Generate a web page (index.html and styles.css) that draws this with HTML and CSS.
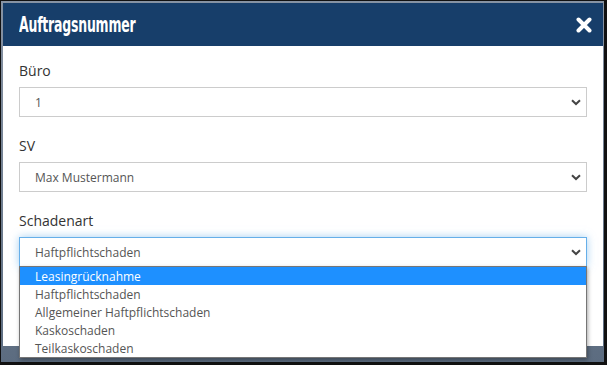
FILE: index.html
```html
<!DOCTYPE html>
<html lang="de">

<head>
  <meta charset="UTF-8">
  <meta name="viewport" content="width=device-width, initial-scale=1.0">
  <title>Auftragsnummer</title>
  <link rel="stylesheet" href="styles.css">
</head>

<body>

  <div class="screen">
    <div class="modal">
      <div class="modalHeader">
        <h4 class="modalTitle">Auftragsnummer</h4>
        <svg class="closeIcon" width="16" height="16" viewBox="0 0 16 16">
          <path d="M2.5 2.5 L13.5 13.5 M13.5 2.5 L2.5 13.5" stroke="#fff" stroke-width="4" stroke-linecap="round" fill="none"/>
        </svg>
      </div>

      <div class="modalBody">
        <div class="field">
          <label class="fieldLabel">Büro</label>
          <div class="select">
            <span>1</span>
            <svg class="chevron" width="10" height="7" viewBox="0 0 10 7"><path d="M1 1.2 L5 5 L9 1.2" stroke="#444" stroke-width="2" fill="none"/></svg>
          </div>
        </div>

        <div class="field">
          <label class="fieldLabel">SV</label>
          <div class="select">
            <span>Max Mustermann</span>
            <svg class="chevron" width="10" height="7" viewBox="0 0 10 7"><path d="M1 1.2 L5 5 L9 1.2" stroke="#444" stroke-width="2" fill="none"/></svg>
          </div>
        </div>

        <div class="field">
          <label class="fieldLabel">Schadenart</label>
          <div class="selectWrap">
            <div class="select focused">
              <span>Haftpflichtschaden</span>
              <svg class="chevron" width="10" height="7" viewBox="0 0 10 7"><path d="M1 1.2 L5 5 L9 1.2" stroke="#444" stroke-width="2" fill="none"/></svg>
            </div>
            <!-- open option list -->
            <ul class="optionList">
              <li class="option active">Leasingrücknahme</li>
              <li class="option">Haftpflichtschaden</li>
              <li class="option">Allgemeiner Haftpflichtschaden</li>
              <li class="option">Kaskoschaden</li>
              <li class="option">Teilkaskoschaden</li>
            </ul>
          </div>
        </div>
      </div>
    </div>
  </div>

</body>

</html>
```

FILE: styles.css
```css
* {
  box-sizing: border-box;
}

body {
  margin: 0;
  font-family: "Open Sans", Arial, sans-serif;
  overflow: hidden;
}

.screen {
  width: 607px;
  height: 365px;
  border: 1px solid #111;
  border-right-width: 3px;
  border-bottom-width: 3px;
  padding: 2px 1px 0 2px;
  background: linear-gradient(#8793a3, #5c6c80);
}

.modal {
  background: #fff;
  height: 343px;
}

.modalHeader {
  background-color: #173e6a;
  height: 43px;
  padding: 0 11px 0 16px;
  display: flex;
  align-items: center;
  justify-content: space-between;
}

.modalTitle {
  margin: 0;
  color: #fff;
  font-family: "DejaVu Sans Condensed", "DejaVu Sans", sans-serif;
  font-stretch: condensed;
  font-weight: bold;
  font-size: 21px;
  letter-spacing: -0.3px;
  transform: scaleX(0.66);
  transform-origin: left center;
}

.closeIcon {
  display: block;
  margin-top: 1px;
}

.modalBody {
  padding: 15px 16px 0 16px;
}

.field {
  margin-bottom: 19px;
}

.fieldLabel {
  display: block;
  font-size: 14px;
  line-height: 20px;
  color: #333;
  margin-bottom: 6px;
}

.selectWrap {
  position: relative;
}

.select {
  height: 30px;
  border: 1px solid #ccc;
  padding: 0 5px 0 15px;
  display: flex;
  align-items: center;
  justify-content: space-between;
  font-size: 12px;
  color: #555;
}

.select.focused {
  border-color: #66afe9;
  box-shadow: 0 0 8px rgba(102, 175, 233, 0.6);
}

.optionList {
  position: absolute;
  left: 0;
  right: 0;
  top: 29px;
  margin: 0;
  padding: 0;
  list-style: none;
  background: #fff;
  border: 1px solid #767676;
  box-shadow: 1px 2px 4px rgba(0, 0, 0, 0.35);
}

.option {
  height: 18px;
  line-height: 16px;
  padding: 2px 0 0 15px;
  font-size: 12px;
  color: #555;
}

.option.active {
  background-color: #1e90ff;
  color: #fff;
}
```
